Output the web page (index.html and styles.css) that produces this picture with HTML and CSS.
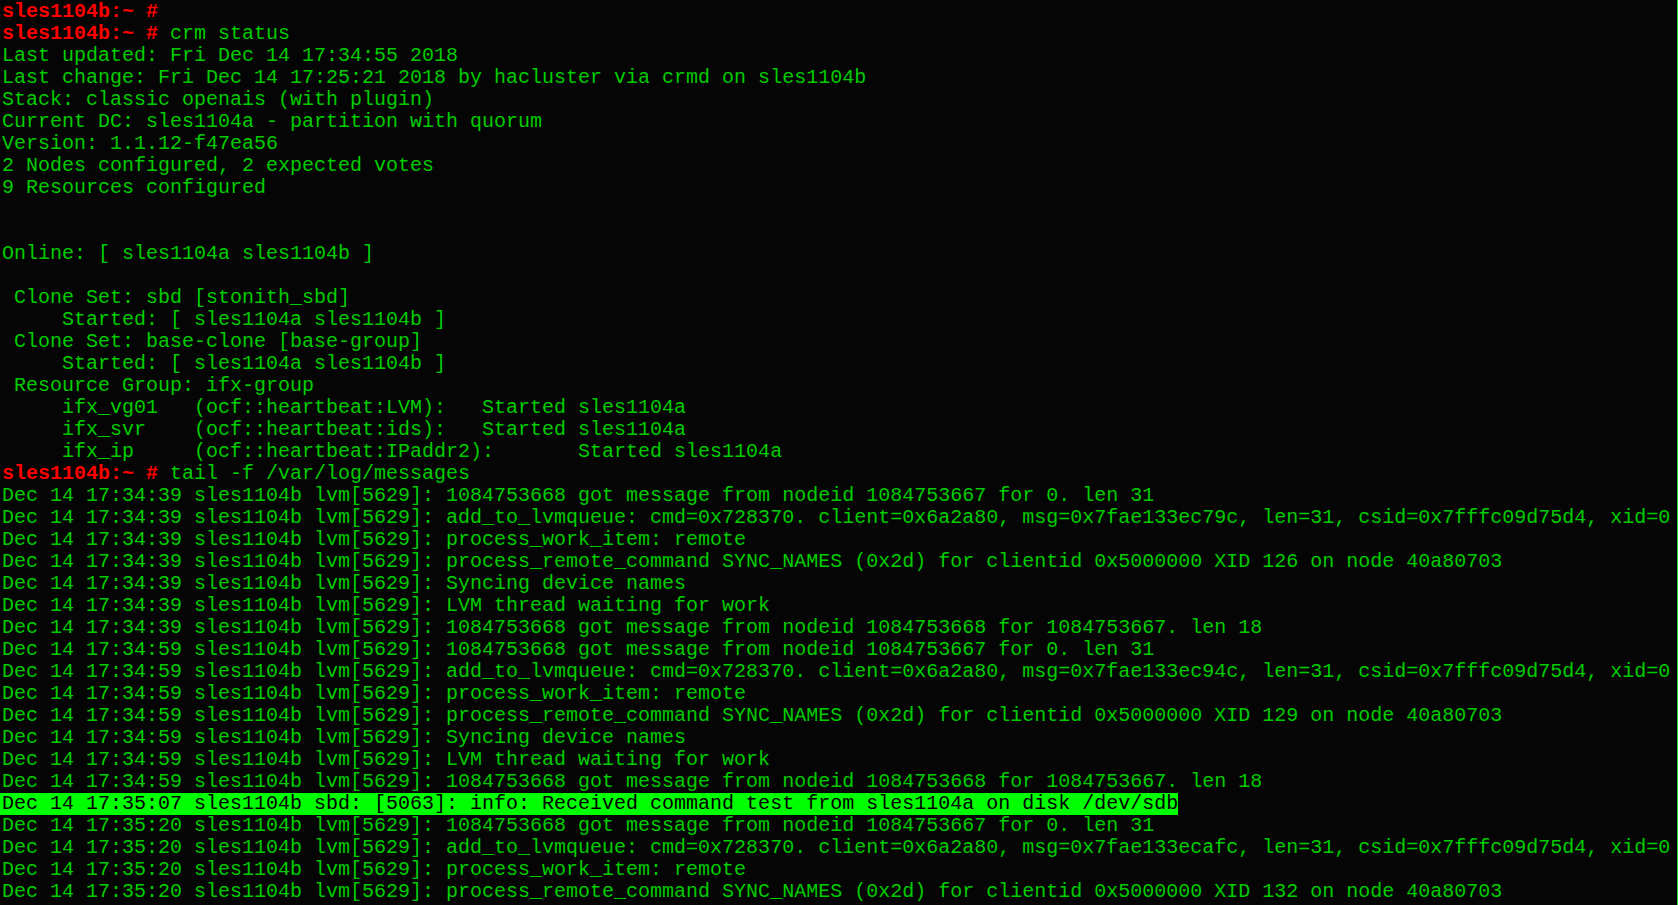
FILE: index.html
```html
<!DOCTYPE html>
<html>
<head>
<meta charset="utf-8">
<link rel="stylesheet" href="styles.css">
<title>crm status</title>
</head>
<body>
<div class="term">
<div class="ln"><span class="pr">sles1104b:~ #</span></div>
<div class="ln"><span class="pr">sles1104b:~ #</span> crm status</div>
<div class="ln">Last updated: Fri Dec 14 17:34:55 2018</div>
<div class="ln">Last change: Fri Dec 14 17:25:21 2018 by hacluster via crmd on sles1104b</div>
<div class="ln">Stack: classic openais (with plugin)</div>
<div class="ln">Current DC: sles1104a - partition with quorum</div>
<div class="ln">Version: 1.1.12-f47ea56</div>
<div class="ln">2 Nodes configured, 2 expected votes</div>
<div class="ln">9 Resources configured</div>
<div class="ln"> </div>
<div class="ln"> </div>
<div class="ln">Online: [ sles1104a sles1104b ]</div>
<div class="ln"> </div>
<div class="ln"> Clone Set: sbd [stonith_sbd]</div>
<div class="ln">     Started: [ sles1104a sles1104b ]</div>
<div class="ln"> Clone Set: base-clone [base-group]</div>
<div class="ln">     Started: [ sles1104a sles1104b ]</div>
<div class="ln"> Resource Group: ifx-group</div>
<div class="ln">     ifx_vg01   (ocf::heartbeat:LVM):   Started sles1104a</div>
<div class="ln">     ifx_svr    (ocf::heartbeat:ids):   Started sles1104a</div>
<div class="ln">     ifx_ip     (ocf::heartbeat:IPaddr2):       Started sles1104a</div>
<div class="ln"><span class="pr">sles1104b:~ #</span> tail -f /var/log/messages</div>
<div class="ln">Dec 14 17:34:39 sles1104b lvm[5629]: 1084753668 got message from nodeid 1084753667 for 0. len 31</div>
<div class="ln">Dec 14 17:34:39 sles1104b lvm[5629]: add_to_lvmqueue: cmd=0x728370. client=0x6a2a80, msg=0x7fae133ec79c, len=31, csid=0x7fffc09d75d4, xid=0</div>
<div class="ln">Dec 14 17:34:39 sles1104b lvm[5629]: process_work_item: remote</div>
<div class="ln">Dec 14 17:34:39 sles1104b lvm[5629]: process_remote_command SYNC_NAMES (0x2d) for clientid 0x5000000 XID 126 on node 40a80703</div>
<div class="ln">Dec 14 17:34:39 sles1104b lvm[5629]: Syncing device names</div>
<div class="ln">Dec 14 17:34:39 sles1104b lvm[5629]: LVM thread waiting for work</div>
<div class="ln">Dec 14 17:34:39 sles1104b lvm[5629]: 1084753668 got message from nodeid 1084753668 for 1084753667. len 18</div>
<div class="ln">Dec 14 17:34:59 sles1104b lvm[5629]: 1084753668 got message from nodeid 1084753667 for 0. len 31</div>
<div class="ln">Dec 14 17:34:59 sles1104b lvm[5629]: add_to_lvmqueue: cmd=0x728370. client=0x6a2a80, msg=0x7fae133ec94c, len=31, csid=0x7fffc09d75d4, xid=0</div>
<div class="ln">Dec 14 17:34:59 sles1104b lvm[5629]: process_work_item: remote</div>
<div class="ln">Dec 14 17:34:59 sles1104b lvm[5629]: process_remote_command SYNC_NAMES (0x2d) for clientid 0x5000000 XID 129 on node 40a80703</div>
<div class="ln">Dec 14 17:34:59 sles1104b lvm[5629]: Syncing device names</div>
<div class="ln">Dec 14 17:34:59 sles1104b lvm[5629]: LVM thread waiting for work</div>
<div class="ln">Dec 14 17:34:59 sles1104b lvm[5629]: 1084753668 got message from nodeid 1084753668 for 1084753667. len 18</div>
<div class="ln"><span class="hl">Dec 14 17:35:07 sles1104b sbd: [5063]: info: Received command test from sles1104a on disk /dev/sdb</span></div>
<div class="ln">Dec 14 17:35:20 sles1104b lvm[5629]: 1084753668 got message from nodeid 1084753667 for 0. len 31</div>
<div class="ln">Dec 14 17:35:20 sles1104b lvm[5629]: add_to_lvmqueue: cmd=0x728370. client=0x6a2a80, msg=0x7fae133ecafc, len=31, csid=0x7fffc09d75d4, xid=0</div>
<div class="ln">Dec 14 17:35:20 sles1104b lvm[5629]: process_work_item: remote</div>
<div class="ln">Dec 14 17:35:20 sles1104b lvm[5629]: process_remote_command SYNC_NAMES (0x2d) for clientid 0x5000000 XID 132 on node 40a80703</div>
</div>
</body>
</html>
```

FILE: styles.css
```css
html, body {
  margin: 0;
  padding: 0;
  background: #050505;
  overflow: hidden;
}
.term {
  box-sizing: border-box;
  width: 1678px;
  height: 905px;
  padding-left: 2px;
  padding-top: 1px;
  border-right: 1px solid #22dd22;
  background: #050505;
  color: #00cc00;
  font-family: "Liberation Mono", "Courier New", monospace;
  font-size: 20px;
  line-height: 22px;
  overflow: hidden;
}
.ln {
  height: 22px;
  white-space: pre;
}
.pr {
  color: #ff0000;
  font-weight: bold;
}
.hl {
  display: inline-block;
  background: #00ff00;
  color: #000000;
  height: 22px;
  margin-left: -2px;
  padding-left: 2px;
}
```
